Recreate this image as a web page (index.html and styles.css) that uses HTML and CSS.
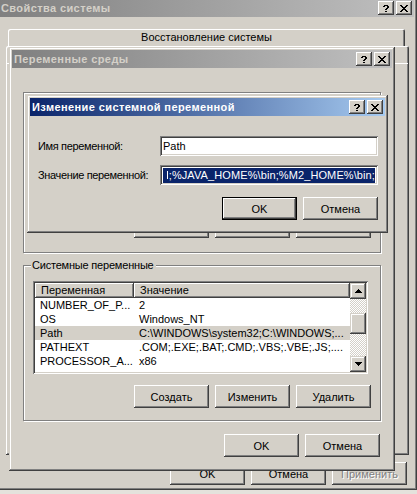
FILE: index.html
```html
<!DOCTYPE html>
<html lang="ru">
<head>
<meta charset="utf-8">
<title>Изменение системной переменной</title>
<link rel="stylesheet" href="styles.css">
</head>
<body>
<div class="win win-sys">
  <div class="titlebar inactive">
    <span class="title">Свойства системы</span>
    <div class="tbtns">
      <span class="tbtn"><svg width="6" height="7" viewBox="0 0 6 7"><path d="M1 0h4v1H1zM0 1h2v1H0zM4 1h2v1H4zM4 2h2v1H4zM3 3h2v1H3zM2 4h2v1H2zM2 6h2v1H2z"/></svg></span>
      <span class="tbtn"><svg width="8" height="7" viewBox="0 0 8 7"><path d="M0 0h2v1H0zM6 0h2v1H6zM1 1h2v1H1zM5 1h2v1H5zM2 2h4v1H2zM3 3h2v1H3zM2 4h4v1H2zM1 5h2v1H1zM5 5h2v1H5zM0 6h2v1H0zM6 6h2v1H6z"/></svg></span>
    </div>
  </div>
  <div class="sys-body">
    <div class="tabrow back"><div class="tab">Восстановление системы</div></div>
    <div class="tabrow front"><div class="tab">Дополнительно</div></div>
    <div class="panel"></div>
    <div class="btnrow sys-btns">
      <button class="btn">OK</button>
      <button class="btn">Отмена</button>
      <button class="btn" disabled>Применить</button>
    </div>
  </div>
</div>

<div class="win win-env">
  <div class="titlebar inactive">
    <span class="title">Переменные среды</span>
    <div class="tbtns">
      <span class="tbtn"><svg width="6" height="7" viewBox="0 0 6 7"><path d="M1 0h4v1H1zM0 1h2v1H0zM4 1h2v1H4zM4 2h2v1H4zM3 3h2v1H3zM2 4h2v1H2zM2 6h2v1H2z"/></svg></span>
      <span class="tbtn"><svg width="8" height="7" viewBox="0 0 8 7"><path d="M0 0h2v1H0zM6 0h2v1H6zM1 1h2v1H1zM5 1h2v1H5zM2 2h4v1H2zM3 3h2v1H3zM2 4h4v1H2zM1 5h2v1H1zM5 5h2v1H5zM0 6h2v1H0zM6 6h2v1H6z"/></svg></span>
    </div>
  </div>
  <div class="env-body">
    <div class="group user-group">
      <div class="btnrow group-btns">
        <button class="btn">Создать</button>
        <button class="btn">Изменить</button>
        <button class="btn">Удалить</button>
      </div>
    </div>
    <div class="group sys-group">
      <div class="legend">Системные переменные</div>
      <div class="list">
        <div class="list-main">
          <div class="lv-head"><span>Переменная</span><span>Значение</span></div>
          <div class="row"><span>NUMBER_OF_P...</span><span>2</span></div>
          <div class="row"><span>OS</span><span>Windows_NT</span></div>
          <div class="row sel"><span>Path</span><span>C:\WINDOWS\system32;C:\WINDOWS;...</span></div>
          <div class="row"><span>PATHEXT</span><span>.COM;.EXE;.BAT;.CMD;.VBS;.VBE;.JS;....</span></div>
          <div class="row"><span>PROCESSOR_A...</span><span>x86</span></div>
        </div>
        <div class="scroll">
          <span class="sb-btn"><svg width="7" height="4" viewBox="0 0 7 4"><path d="M3 0h1v1H3zM2 1h3v1H2zM1 2h5v1H1zM0 3h7v1H0z"/></svg></span>
          <div class="sb-track"><span class="sb-thumb"></span></div>
          <span class="sb-btn"><svg width="7" height="4" viewBox="0 0 7 4"><path d="M0 0h7v1H0zM1 1h5v1H1zM2 2h3v1H2zM3 3h1v1H3z"/></svg></span>
        </div>
      </div>
      <div class="btnrow group-btns">
        <button class="btn">Создать</button>
        <button class="btn">Изменить</button>
        <button class="btn">Удалить</button>
      </div>
    </div>
    <div class="btnrow env-btns">
      <button class="btn">OK</button>
      <button class="btn">Отмена</button>
    </div>
  </div>
</div>

<div class="win win-edit">
  <div class="titlebar active">
    <span class="title">Изменение системной переменной</span>
    <div class="tbtns">
      <span class="tbtn"><svg width="6" height="7" viewBox="0 0 6 7"><path d="M1 0h4v1H1zM0 1h2v1H0zM4 1h2v1H4zM4 2h2v1H4zM3 3h2v1H3zM2 4h2v1H2zM2 6h2v1H2z"/></svg></span>
      <span class="tbtn"><svg width="8" height="7" viewBox="0 0 8 7"><path d="M0 0h2v1H0zM6 0h2v1H6zM1 1h2v1H1zM5 1h2v1H5zM2 2h4v1H2zM3 3h2v1H3zM2 4h4v1H2zM1 5h2v1H1zM5 5h2v1H5zM0 6h2v1H0zM6 6h2v1H6z"/></svg></span>
    </div>
  </div>
  <div class="edit-body">
    <div class="form">
      <label class="lbl">Имя переменной:</label>
      <div class="field"><span>Path</span></div>
      <label class="lbl">Значение переменной:</label>
      <div class="field value"><span class="selected">;%JAVA_HOME%\bin;%M2_HOME%\bin;</span></div>
    </div>
    <div class="btnrow edit-btns">
      <button class="btn default">OK</button>
      <button class="btn">Отмена</button>
    </div>
  </div>
</div>
</body>
</html>
```

FILE: styles.css
```css
* { box-sizing: border-box; }

html, body {
  margin: 0;
  padding: 0;
}

body {
  width: 417px;
  height: 494px;
  overflow: hidden;
  position: relative;
  background: #e4e2dc;
  font-family: "Liberation Sans", Arial, sans-serif;
  font-size: 11px;
  color: #000;
}

/* classic window frame */
.win {
  position: absolute;
  display: flex;
  flex-direction: column;
  padding: 3px;
  background: #d4d0c8;
  box-shadow: inset -1px -1px #404040, inset 1px 1px #d4d0c8,
              inset -2px -2px #808080, inset 2px 2px #fff;
}

.win-sys { left: -4px; top: -4px; width: 421px; height: 494px; }
.win-env { left: 9px; top: 47px; width: 386px; height: 424px; }
.win-edit { left: 27px; top: 95px; width: 361px; height: 138px; }

.titlebar {
  flex: none;
  height: 18px;
  display: flex;
  align-items: center;
  justify-content: space-between;
  padding: 0 2px 0 2px;
  font-weight: bold;
  font-size: 11px;
  letter-spacing: 0.4px;
  white-space: nowrap;
}
.titlebar.inactive { background: linear-gradient(to right, #808080, #c0c0c0); color: #d4d0c8; }
.titlebar.active { background: linear-gradient(to right, #0a246a, #a6caf0); color: #fff; }

.tbtns { display: flex; gap: 2px; }
.tbtn {
  width: 16px;
  height: 14px;
  display: flex;
  align-items: center;
  justify-content: center;
  background: #d4d0c8;
  box-shadow: inset -1px -1px #404040, inset 1px 1px #fff,
              inset -2px -2px #808080, inset 2px 2px #d4d0c8;
}
.tbtn svg { display: block; fill: #000; shape-rendering: crispEdges; }

/* buttons */
.btnrow { display: flex; justify-content: flex-end; gap: 6px; flex: none; }
.btn {
  width: 75px;
  height: 23px;
  padding: 0;
  border: 0;
  background: #d4d0c8;
  font: inherit;
  color: #000;
  box-shadow: inset -1px -1px #404040, inset 1px 1px #fff,
              inset -2px -2px #808080, inset 2px 2px #d4d0c8;
}
.btn.default {
  box-shadow: inset 0 0 0 1px #000, inset -2px -2px #404040, inset 2px 2px #fff,
              inset -3px -3px #808080;
}
.btn:disabled { color: #808080; text-shadow: 1px 1px #fff; }

/* system properties body */
.sys-body {
  flex: 1;
  display: flex;
  flex-direction: column;
  padding: 12px 5px 2px 7px;
}
.tabrow { display: flex; height: 17px; flex: none; }
.tabrow.back { padding: 0 4px 0 2px; }
.tab {
  flex: 1;
  background: #d4d0c8;
  text-align: center;
  line-height: 17px;
  border-radius: 2px 2px 0 0;
  box-shadow: inset 1px 1px #fff, inset -1px 0 #404040, inset -2px 0 #808080;
}
.panel {
  flex: 1;
  background: #d4d0c8;
  box-shadow: inset -1px -1px #404040, inset 1px 1px #fff, inset -2px -2px #808080;
}
.sys-btns { margin-top: 7px; margin-right: 2px; }

/* environment variables body */
.env-body {
  flex: 1;
  display: flex;
  flex-direction: column;
  padding: 0 0 0 11px;
}
.group {
  width: 358px;
  border: 1px solid #808080;
  box-shadow: inset 1px 1px #fff, 1px 1px #fff;
  display: flex;
  flex-direction: column;
  flex: none;
}
.user-group {
  margin-top: 24px;
  height: 161px;
  justify-content: flex-end;
  padding: 0 9px 14px 0;
}
.sys-group {
  margin-top: 12px;
  height: 156px;
  padding-right: 9px;
}
.legend {
  margin: -7px 0 0 7px;
  padding: 0 2px 0 1px;
  line-height: 13px;
  letter-spacing: -0.2px;
  background: #d4d0c8;
  width: fit-content;
}
.sys-group .group-btns { margin-top: 11px; }
.env-btns { margin-top: 13px; margin-right: 12px; }

/* list view */
.list {
  margin: 9px 0 0 9px;
  width: 335px;
  height: 93px;
  padding: 2px;
  display: flex;
  background: #fff;
  box-shadow: inset 1px 1px #808080, inset -1px -1px #fff,
              inset 2px 2px #404040, inset -2px -2px #d4d0c8;
}
.list-main { flex: 1; display: flex; flex-direction: column; overflow: hidden; }
.lv-head, .row { display: grid; grid-template-columns: 99px 1fr; flex: none; }
.lv-head { height: 15px; }
.lv-head span {
  background: #d4d0c8;
  padding-left: 6px;
  line-height: 14px;
  box-shadow: inset -1px -1px #404040, inset 1px 1px #fff, inset -2px -2px #808080;
}
.row { height: 14px; line-height: 14px; }
.row span { padding-left: 5px; white-space: nowrap; overflow: hidden; }
.row.sel { background: #d4d0c8; }

.scroll {
  width: 16px;
  flex: none;
  display: flex;
  flex-direction: column;
  background: repeating-conic-gradient(#fff 0 25%, #d4d0c8 0 50%) 0 0 / 2px 2px;
}
.sb-btn, .sb-thumb {
  display: flex;
  align-items: center;
  justify-content: center;
  background: #d4d0c8;
  box-shadow: inset -1px -1px #404040, inset 1px 1px #d4d0c8,
              inset -2px -2px #808080, inset 2px 2px #fff;
}
.sb-btn { height: 16px; flex: none; }
.sb-btn svg { display: block; fill: #000; shape-rendering: crispEdges; }
.sb-track { flex: 1; }
.sb-thumb { display: block; height: 21px; margin-top: 14px; }

/* edit dialog */
.edit-body { flex: 1; display: flex; flex-direction: column; }
.form {
  margin-top: 20px;
  padding-left: 8px;
  display: grid;
  grid-template-columns: 122px 218px;
  grid-auto-rows: 20px;
  row-gap: 9px;
  align-items: center;
}
.lbl { white-space: nowrap; letter-spacing: -0.35px; }
.field {
  height: 20px;
  display: flex;
  align-items: center;
  padding: 0 3px;
  overflow: hidden;
  white-space: nowrap;
  background: #fff;
  box-shadow: inset 1px 1px #808080, inset -1px -1px #fff,
              inset 2px 2px #404040, inset -2px -2px #d4d0c8;
}
.selected {
  flex: 1;
  display: flex;
  justify-content: flex-end;
  align-items: center;
  background: #0a246a;
  color: #fff;
  line-height: 15px;
  letter-spacing: 0.1px;
}
.selected::before {
  content: "";
  width: 1px;
  height: 8px;
  margin-right: 1px;
  background: #fff;
}
.edit-btns { margin-top: 12px; padding-right: 7px; }
```
